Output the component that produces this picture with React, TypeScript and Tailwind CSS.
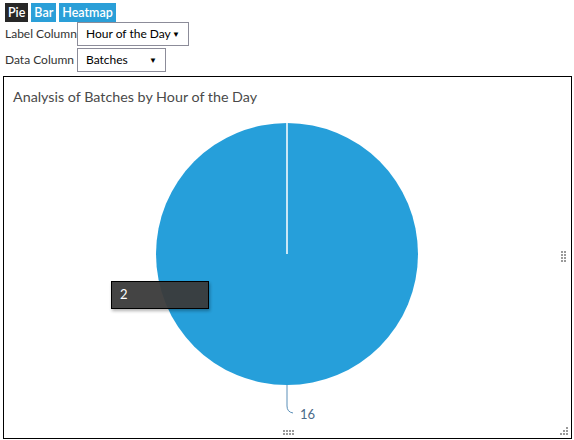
import React from "react";

const font = { fontFamily: 'Lato, "Noto Sans", sans-serif' };

function Grip({ cols, rows }: { cols: number; rows: number }) {
  return (
    <div className="grid gap-[1px]" style={{ gridTemplateColumns: `repeat(${cols}, 2px)` }}>
      {Array.from({ length: cols * rows }).map((_, i) => (
        <span key={i} className="block h-[2px] w-[2px] bg-[#9a9a9a]" />
      ))}
    </div>
  );
}

function Select({ value, width }: { value: string; width: string }) {
  return (
    <div
      className={`flex h-[24px] shrink-0 items-center justify-between whitespace-nowrap border border-[#8c8c99] bg-white pl-[8px] pr-[8px] text-[12px] text-black ${width}`}
    >
      <span>{value}</span>
      <span className="text-[8px]">▼</span>
    </div>
  );
}

export default function App() {
  const cx = 287;
  const cy = 254;
  const r = 131;

  return (
    <div className="h-[440px] w-[574px] overflow-hidden bg-white" style={font}>
      <div className="flex h-[22px] items-start gap-[3px] pl-[5px] pt-[3px] text-[12.5px] font-semibold leading-[19px] text-white">
        <span className="bg-[#272727] px-[3px]">Pie</span>
        <span className="bg-[#2a9fd8] px-[3px]">Bar</span>
        <span className="bg-[#2a9fd8] px-[3px]">Heatmap</span>
      </div>
      <div className="flex h-[24px] items-center gap-[3px] whitespace-nowrap pl-[5px] text-[12px] text-[#333]">
        <span className="w-[69px]">Label Column</span>
        <Select value="Hour of the Day" width="w-[112px]" />
      </div>
      <div className="mt-[2px] flex h-[24px] items-center gap-[3px] whitespace-nowrap pl-[5px] text-[12px] text-[#333]">
        <span className="w-[69px]">Data Column</span>
        <Select value="Batches" width="w-[89px]" />
      </div>

      <div className="relative ml-[3px] mt-[4px] h-[363px] w-[569px] border border-black">
        <div className="pl-[9px] pt-[9px] text-[14.3px] text-[#4a4a4a]">
          Analysis of Batches by Hour of the Day
        </div>
        <svg className="absolute left-[-4px] top-[-77px]" width="574" height="440">
          <circle cx={cx} cy={cy} r={r} fill="#269fda" />
          <line x1={cx} y1={cy} x2={cx} y2={cy - r} stroke="white" strokeWidth="1.5" />
          <path
            d={`M ${cx} ${cy + r} L ${cx} ${cy + r + 21} Q ${cx} ${cy + r + 27} ${cx + 6} ${cy + r + 28}`}
            fill="none"
            stroke="#5a8fb8"
            strokeWidth="1"
          />
          <text x={cx + 13} y={cy + r + 34} fontSize="13" fill="#4a6a8a" style={font}>
            16
          </text>
        </svg>
        <div className="absolute left-[107px] top-[204px] flex h-[28px] w-[98px] items-center border border-black bg-[#3a3a3a]/95 pl-[8px] text-[13px] text-white shadow-[1px_2px_3px_rgba(0,0,0,0.3)]">
          2
        </div>
        <div className="absolute right-[5px] top-[174px]">
          <Grip cols={2} rows={4} />
        </div>
        <div className="absolute bottom-[3px] left-[279px]">
          <Grip cols={4} rows={2} />
        </div>
        <div className="absolute bottom-[3px] right-[3px] flex flex-col items-end gap-[1px]">
          <span className="block h-[2px] w-[2px] bg-[#9a9a9a]" />
          <div className="flex gap-[1px]">
            <span className="block h-[2px] w-[2px] bg-[#9a9a9a]" />
            <span className="block h-[2px] w-[2px] bg-[#9a9a9a]" />
          </div>
          <div className="flex gap-[1px]">
            <span className="block h-[2px] w-[2px] bg-[#9a9a9a]" />
            <span className="block h-[2px] w-[2px] bg-[#9a9a9a]" />
            <span className="block h-[2px] w-[2px] bg-[#9a9a9a]" />
          </div>
        </div>
      </div>
    </div>
  );
}
